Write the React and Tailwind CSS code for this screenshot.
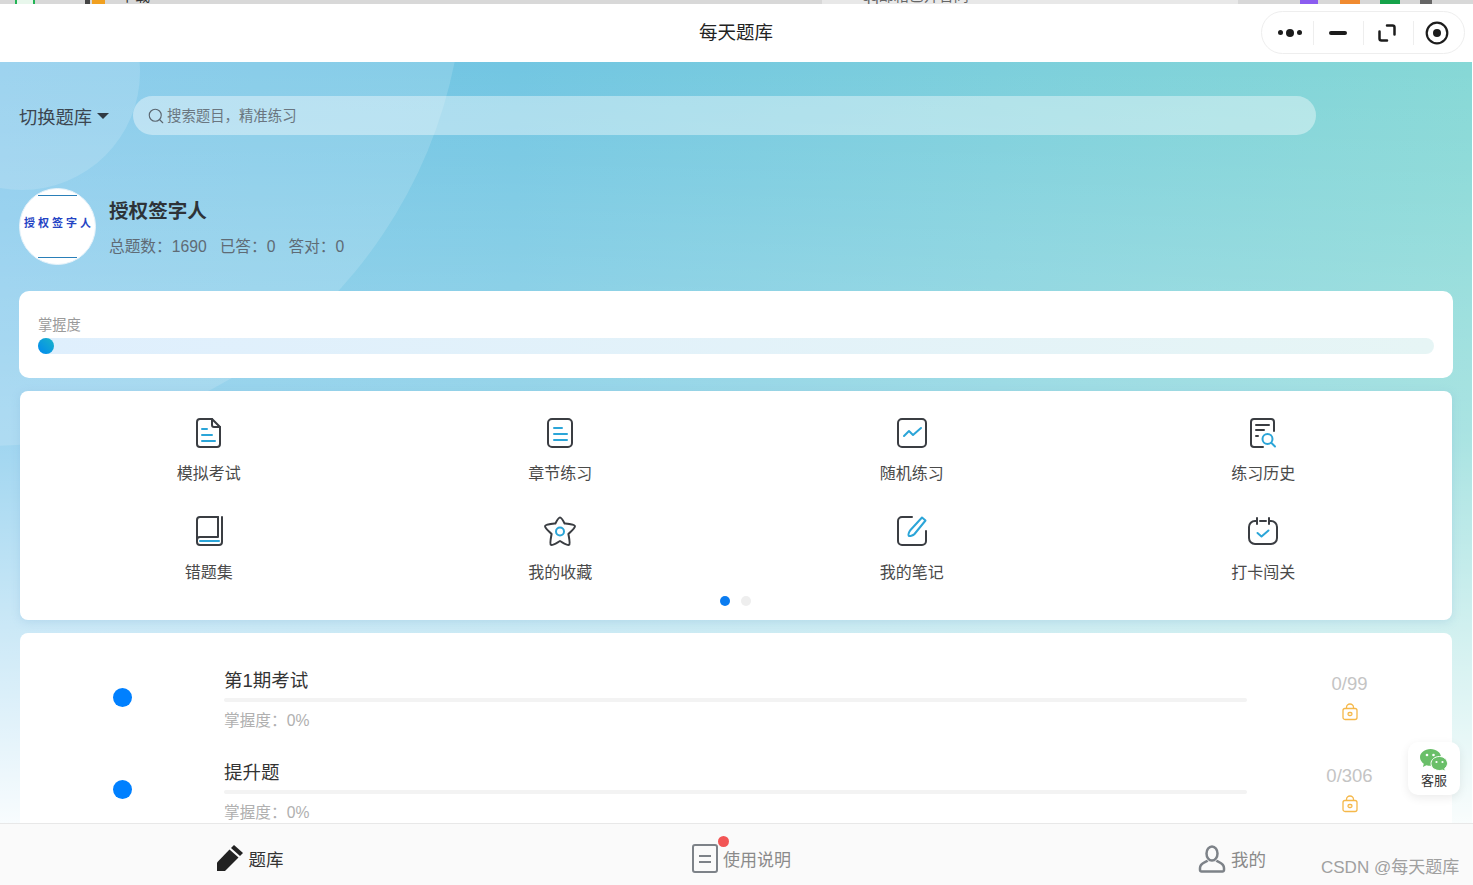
import React from "react";
import { Search } from "lucide-react";

const font = "font-['Liberation_Sans','Noto_Sans_CJK_SC',sans-serif]";
const DARK = "#3a3d42";
const BLUE = "#2ba5d8";

const DocIcon = () => (
  <svg width="26" height="32" viewBox="0 0 26 32" fill="none" strokeWidth="2" strokeLinecap="round" strokeLinejoin="round">
    <path d="M4 2h12l8 8v17a3 3 0 0 1-3 3H4a3 3 0 0 1-3-3V5a3 3 0 0 1 3-3z" stroke={DARK} />
    <path d="M16 2v6a2 2 0 0 0 2 2h6" stroke={DARK} />
    <path d="M6 12h5M6 18h10M6 24h13" stroke={BLUE} />
  </svg>
);

const ListIcon = () => (
  <svg width="26" height="32" viewBox="0 0 26 32" fill="none" strokeWidth="2" strokeLinecap="round">
    <rect x="1" y="2" width="24" height="28" rx="4" stroke={DARK} />
    <path d="M7 11h8M7 17h13M7 23h13" stroke={BLUE} />
  </svg>
);

const ChartIcon = () => (
  <svg width="30" height="30" viewBox="0 0 30 30" fill="none" strokeWidth="2" strokeLinecap="round" strokeLinejoin="round">
    <rect x="1" y="1" width="28" height="28" rx="4" stroke={DARK} />
    <path d="M7 18l5-5 4 4 8-7" stroke={BLUE} />
  </svg>
);

const HistoryIcon = () => (
  <svg width="28" height="30" viewBox="0 0 28 30" fill="none" strokeWidth="2" strokeLinecap="round">
    <path d="M14 29H5a3 3 0 0 1-3-3V4a3 3 0 0 1 3-3h17a3 3 0 0 1 3 3v9" stroke={DARK} />
    <path d="M7 7h13M7 12h8M7 18h2" stroke={DARK} />
    <circle cx="18.500" cy="21" r="5" stroke={BLUE} />
    <path d="M22.500 25l3.500 3.500" stroke={BLUE} />
  </svg>
);

const BookIcon = () => (
  <svg width="28" height="30" viewBox="0 0 28 30" fill="none" strokeWidth="2" strokeLinecap="round" strokeLinejoin="round">
    <path d="M23 1H5a3 3 0 0 0-3 3v22a3 3 0 0 0 3 3h19a3 3 0 0 0 3-3V1" stroke={DARK} />
    <path d="M23 1v20H5a3 3 0 0 0-3 3" stroke={DARK} />
    <path d="M5 25h19" stroke={BLUE} />
  </svg>
);

const StarIcon = () => (
  <svg width="32" height="31" viewBox="0 0 32 31" fill="none" strokeWidth="2" strokeLinejoin="round">
    <path d="M16 1.500c1.300 0 2.200 1.200 4.600 6 5.500.6 9.900 1 10.300 2.600.4 1.500-3.100 4.500-6.500 7.900 1 5.400 2 9.700.7 10.800-1.300 1-4.800-1.400-9.100-3.800-4.300 2.400-7.800 4.800-9.100 3.800-1.300-1.100-.3-5.400.7-10.800C4.200 14.600.7 11.600 1.100 10.100c.4-1.600 4.800-2 10.300-2.600 2.400-4.800 3.300-6 4.600-6z" stroke={DARK} />
    <circle cx="16" cy="15.500" r="4" stroke={BLUE} />
  </svg>
);

const NoteIcon = () => (
  <svg width="30" height="30" viewBox="0 0 30 30" fill="none" strokeWidth="2" strokeLinecap="round" strokeLinejoin="round">
    <path d="M15 1H5a4 4 0 0 0-4 4v20a4 4 0 0 0 4 4h20a4 4 0 0 0 4-4V15" stroke={DARK} />
    <path d="M25 1.500l3.500 3-11 13.500c-1.500 1.700-5 2.500-5.800 1.800-.8-.8.300-4 1.800-5.800z" stroke={BLUE} />
  </svg>
);

const CalendarIcon = () => (
  <svg width="30" height="28" viewBox="0 0 30 28" fill="none" strokeWidth="2" strokeLinecap="round" strokeLinejoin="round">
    <path d="M8 4H7a6 6 0 0 0-6 6v11a6 6 0 0 0 6 6h16a6 6 0 0 0 6-6V10a6 6 0 0 0-6-6h-1" stroke={DARK} />
    <path d="M9 1v6M21 1v6M12 4h6" stroke={DARK} />
    <path d="M9.500 16l4 3.500 7-6" stroke={BLUE} />
  </svg>
);

const LockIcon = () => (
  <svg width="16" height="18" viewBox="0 0 16 18" fill="none" stroke="#f5b84a" strokeWidth="1.300">
    <rect x="1" y="5.500" width="14" height="11" rx="2" />
    <path d="M4.500 5.500V4.500a3.500 3.500 0 0 1 7 0v1" />
    <rect x="6" y="9.500" width="4" height="3" rx="1.500" />
  </svg>
);

const WeChatIcon = () => (
  <svg width="28" height="22" viewBox="0 0 28 22">
    <path d="M10.500 0C4.700 0 0 3.700 0 8.300c0 2.600 1.500 4.900 3.800 6.400L2.900 18l3.500-1.800c1.300.4 2.700.6 4.100.6 5.800 0 10.500-3.800 10.500-8.500S16.300 0 10.500 0z" fill="#6abf69" />
    <path d="M19.500 7.500c-4.700 0-8.500 3.100-8.500 7s3.800 7 8.500 7c1 0 2-.1 2.900-.4l3 1-.7-2.700c1.700-1.300 2.800-3 2.800-4.900 0-3.900-3.800-7-8-7z" fill="#6abf69" stroke="#fff" strokeWidth="1" />
    <circle cx="7" cy="6" r="1.300" fill="#fff" />
    <circle cx="13.500" cy="6" r="1.300" fill="#fff" />
    <circle cx="16.500" cy="13" r="1.100" fill="#fff" />
    <circle cx="22.500" cy="13" r="1.100" fill="#fff" />
  </svg>
);

const features = [
  { label: "模拟考试", icon: <DocIcon /> },
  { label: "章节练习", icon: <ListIcon /> },
  { label: "随机练习", icon: <ChartIcon /> },
  { label: "练习历史", icon: <HistoryIcon /> },
  { label: "错题集", icon: <BookIcon />, lower: true },
  { label: "我的收藏", icon: <StarIcon />, lower: true },
  { label: "我的笔记", icon: <NoteIcon />, lower: true },
  { label: "打卡闯关", icon: <CalendarIcon />, lower: true },
];

const exams = [
  { title: "第1期考试", count: "0/99" },
  { title: "提升题", count: "0/306" },
];

// only the bottom 4px of the window behind is visible
const TopStrip = () => (
  <div className="h-1 overflow-hidden bg-[#d8d8d8] flex shrink-0 text-[#333333] text-[15px] leading-[4px]">
    <div className="w-[15px]" />
    <div className="w-5 h-1 bg-[#e8f7ec] border-x-2 border-[#22b455]" />
    <div className="w-[50px]" />
    <div className="w-[5px] h-1 bg-[#444444]" />
    <div className="w-[2px]" />
    <div className="w-[13px] h-1 bg-[#f0a020]" />
    <div className="w-[15px]" />
    <div className="w-[702px] -mt-[6px]">下载</div>
    <div className="w-[416px] h-1 bg-[#e8e8e8] pl-[40px] text-[#666666]">
      <div className="-mt-[6px]">qq邮箱已开合同</div>
    </div>
    <div className="w-[62px]" />
    <div className="w-[18px] h-1 bg-[#8b5cf0]" />
    <div className="w-[22px]" />
    <div className="w-5 h-1 bg-[#f08a30]" />
    <div className="w-5" />
    <div className="w-5 h-1 bg-[#16a34a]" />
    <div className="w-5" />
    <div className="w-[12px] h-1 bg-[#666666]" />
  </div>
);

const TitleBar = () => (
  <div className="h-[58px] bg-white flex items-center justify-center relative shrink-0 mr-px">
    <span className="text-[18.5px] text-[#222222]">每天题库</span>
    <div className="absolute right-[7px] top-[7px] w-[204px] h-[43px] rounded-full border border-[#eeeeee] flex items-center">
      <div className="w-[51px] flex items-center justify-center gap-[3px] pl-[5px]">
        <span className="w-[5px] h-[5px] rounded-full bg-[#1c1c1c]" />
        <span className="w-2 h-2 rounded-full bg-[#1c1c1c]" />
        <span className="w-[5px] h-[5px] rounded-full bg-[#1c1c1c]" />
      </div>
      <div className="w-px h-6 bg-[#eeeeee]" />
      <div className="w-[49px] flex justify-center pr-[1px]">
        <span className="w-[18px] h-[4px] rounded-full bg-[#1c1c1c]" />
      </div>
      <div className="w-px h-6 bg-[#eeeeee]" />
      <div className="w-[49px] flex justify-center pr-[3px]">
        <svg width="18" height="18" viewBox="0 0 18 18" fill="none" stroke="#1c1c1c" strokeWidth="2.500" strokeLinecap="round" strokeLinejoin="round">
          <path d="M9 1.500h5.500a2 2 0 0 1 2 2v7M9 16.500H3.500a2 2 0 0 1-2-2v-7" />
        </svg>
      </div>
      <div className="w-px h-6 bg-[#eeeeee]" />
      <div className="flex-1 flex justify-center pr-[5px]">
        <svg width="24" height="24" viewBox="0 0 24 24" fill="none">
          <circle cx="12" cy="12" r="10.300" stroke="#1c1c1c" strokeWidth="2.200" />
          <circle cx="12" cy="12" r="4" fill="#1c1c1c" />
        </svg>
      </div>
    </div>
  </div>
);

const Avatar = () => (
  <div className="w-[77px] h-[77px] rounded-full bg-white border border-[#e6f2fa] flex flex-col items-center justify-between py-[6px] overflow-hidden shrink-0">
    <div className="w-[39px] h-px bg-[#2a7fb8]" />
    <span className="text-[11px] leading-none font-bold text-[#2544c4] tracking-[3px] pl-[3px] -mt-[7px] whitespace-nowrap">授权签字人</span>
    <div className="w-[39px] h-px bg-[#2a7fb8]" />
  </div>
);

const Feature = ({ label, icon, lower }) => (
  <div className="flex flex-col items-center">
    <div className="h-[32px] flex items-center justify-center">{icon}</div>
    <div className={`${lower ? "mt-[15px]" : "mt-[14px]"} h-[22px] leading-[22px] text-[16px] text-[#4a4a4a]`}>{label}</div>
  </div>
);

const ExamRow = ({ title, count }) => (
  <div className="h-[91.5px] flex shrink-0">
    <div className="w-[204px] pl-[93px] pt-[15px]">
      <div className="w-[19px] h-[19px] rounded-full bg-[#0080ff]" />
    </div>
    <div className="w-[1023px]">
      <div className="h-[30px] leading-[30px] text-[18.5px] text-[#333333] -mt-[7px]">{title}</div>
      <div className="h-1 mt-[2px] rounded-full bg-[#f3f3f3]" />
      <div className="mt-[9px] text-[15.7px] leading-5 text-[#b0b0b0]">掌握度：0%</div>
    </div>
    <div className="flex-1 flex flex-col items-center">
      <div className="text-[18.5px] leading-6 text-[#c4c4c4] -mt-[1px]">{count}</div>
      <div className="mt-[7px]"><LockIcon /></div>
    </div>
  </div>
);

const BottomTab = () => (
  <div className="h-[62px] bg-[#fafafa] border-t border-[#e8e8e8] flex shrink-0 relative z-10">
    <div className="w-[490px] flex items-center justify-center gap-[6px] pl-[10px]">
      <svg width="26" height="26" viewBox="0 0 26 26" fill="#222222" className="mt-[6px]">
        <path d="M17 0l9 8-3 3-9-8z" />
        <path d="M12.500 4.500l9 8L8 26H0v-8.500z" />
      </svg>
      <span className="text-[17.5px] text-[#333333] mt-[12px]">题库</span>
    </div>
    <div className="w-[490px] flex items-center justify-center gap-[5px] relative pl-[13px]">
      <div className="w-[26px] h-[29px] mt-[8px] rounded-[3px] border-[2.500px] border-[#7d8288] flex flex-col items-center justify-center gap-[4px]">
        <span className="w-[12px] h-[2px] bg-[#7d8288]" />
        <span className="w-[12px] h-[2px] bg-[#7d8288]" />
      </div>
      <span className="text-[17px] text-[#8a8a8a] mt-[12px]">使用说明</span>
      <span className="absolute left-[228px] top-[12px] w-[11px] h-[11px] rounded-full bg-[#f25555]" />
    </div>
    <div className="flex-1 flex items-center gap-[5px] pl-[218px]">
      <svg width="28" height="28" viewBox="0 0 28 28" fill="none" stroke="#7d8288" strokeWidth="2.500" strokeLinejoin="round" className="mt-[8px]">
        <ellipse cx="14" cy="8.500" rx="5.500" ry="7" />
        <path d="M9.500 15.500C8 17.500 2 17.500 2 23v2a1.500 1.500 0 0 0 1.500 1.500h21A1.500 1.500 0 0 0 26 25v-2c0-5.500-6-5.500-7.500-7.500" />
      </svg>
      <span className="text-[17.5px] text-[#8a8a8a] mt-[12px]">我的</span>
    </div>
    <span className="absolute left-[1321px] top-[34px] text-[17px] leading-5 text-[#a0a0a0] whitespace-nowrap">CSDN @每天题库</span>
  </div>
);

export default function App() {
  return (
    <div className={`${font} w-full h-[885px] overflow-hidden flex flex-col bg-white`}>
      <TopStrip />
      <TitleBar />

      <div className="flex-1 min-h-0 mr-px relative overflow-hidden bg-[linear-gradient(90deg,#78c4ea_0%,#72c6e2_35%,#86d8d6_100%)]">
        {/* background washes behind the page */}
        <div className="absolute -left-[96px] -top-[108px] w-[236px] h-[236px] rounded-full bg-white/15" />
        <div className="absolute -left-[492px] -top-[572px] w-[956px] h-[956px] rounded-full bg-white/15" />
        <div className="absolute inset-0 bg-[linear-gradient(180deg,rgba(255,255,255,0)_0%,rgba(255,255,255,0.3)_50%,rgba(255,255,255,0.95)_100%)]" />

        <div className="relative">
          <div className="flex items-center h-[39px] mt-[34px] pl-[19px]">
            <span className="text-[18.3px] text-[#3c4650] w-[73px] whitespace-nowrap mt-[4px]">切换题库</span>
            <span className="ml-[5px] w-0 h-0 border-x-[6px] border-x-transparent border-t-[6px] border-t-[#2f3a44] mt-[1px]" />
            <div className="ml-[24px] w-[1183px] h-[39px] rounded-full bg-white/40 flex items-center pl-[14px]">
              <Search size={18} strokeWidth={1.500} color="#5a6670" />
              <span className="text-[14.4px] text-[#6a7680] ml-[2px] mt-[2px]">搜索题目，精准练习</span>
            </div>
          </div>

          <div className="flex items-center pl-[19px] mt-[53px]">
            <Avatar />
            <div className="ml-[13px] mt-[2px]">
              <div className="text-[19.6px] leading-7 font-bold text-[#2e3338]">授权签字人</div>
              <div className="flex gap-[13px] mt-[10px] text-[15.7px] leading-6 text-[#5f6b75]">
                <span>总题数：1690</span>
                <span>已答：0</span>
                <span>答对：0</span>
              </div>
            </div>
          </div>

          <div className="ml-[19px] mr-[19px] mt-[26px] h-[87px] rounded-[10px] bg-white px-[19px] pt-[25px]">
            <div className="text-[14.3px] leading-[18px] text-[#9a9a9a]">掌握度</div>
            <div className="h-4 mt-[4px] rounded-full bg-[linear-gradient(90deg,#dfeffd,#e6f5f5)]">
              <div className="w-4 h-4 rounded-full bg-[linear-gradient(45deg,#0088f0,#1ab4c8)]" />
            </div>
          </div>

          <div className="mx-5 mt-[13px] h-[229px] rounded-[8px] bg-white pt-[26px] shadow-[0_2px_8px_rgba(120,170,210,0.25)]">
            <div className="grid grid-cols-4 gap-y-[30px] px-[13px]">
              {features.map((f) => (
                <Feature key={f.label} label={f.label} icon={f.icon} lower={f.lower} />
              ))}
            </div>
            <div className="flex justify-center gap-[11px] mt-[12px] mr-[1px]">
              <span className="w-[10px] h-[10px] rounded-full bg-[#0a7cf0]" />
              <span className="w-[10px] h-[10px] rounded-full bg-[#eeeeee]" />
            </div>
          </div>

          <div className="mx-5 mt-[13px] h-[300px] rounded-t-[8px] bg-white pt-[40px] flex flex-col">
            {exams.map((e) => (
              <ExamRow key={e.title} title={e.title} count={e.count} />
            ))}
          </div>
        </div>

        {/* floating customer-service button */}
        <div className="absolute left-[1408px] top-[680px] w-[52px] h-[53px] rounded-[10px] bg-white shadow-[0_3px_10px_rgba(0,0,0,0.08)] flex flex-col items-center pt-[7px]">
          <WeChatIcon />
          <span className="text-[13px] leading-4 text-[#333333] mt-[2px]">客服</span>
        </div>
      </div>

      <BottomTab />
    </div>
  );
}
